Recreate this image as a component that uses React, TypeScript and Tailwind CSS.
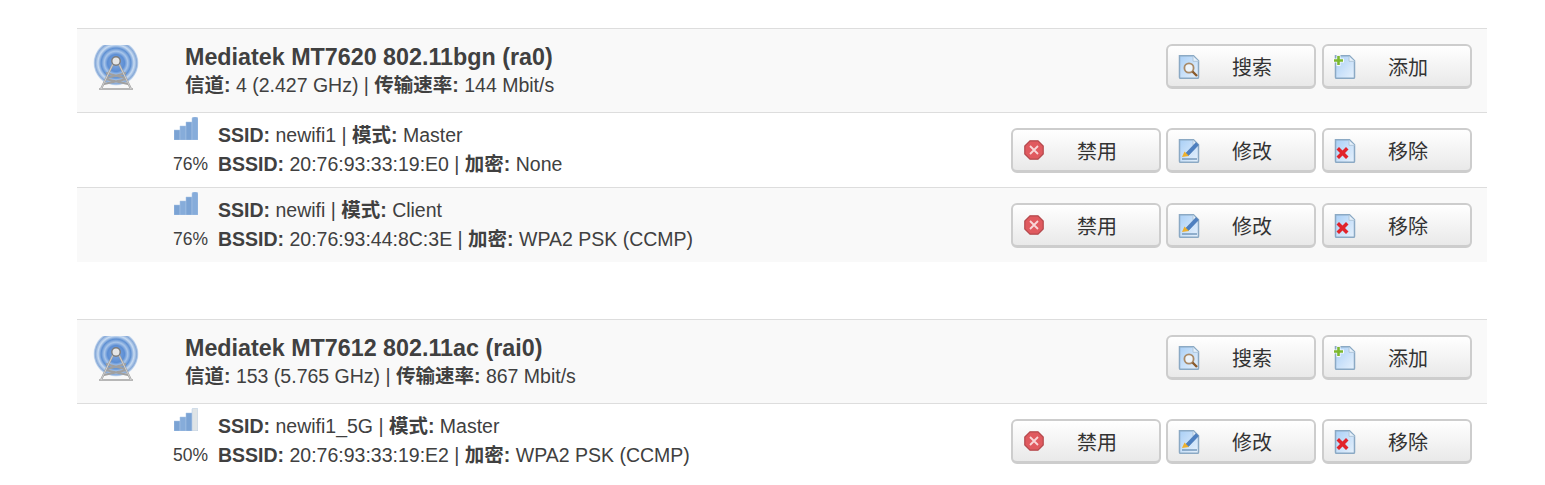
const FONT = "font-['Liberation_Sans','Noto_Sans_CJK_SC',sans-serif]";

function PageIcon({ children }: { children?: React.ReactNode }) {
  return (
    <svg width="24" height="24" viewBox="0 0 24 24" className="mt-[2px] shrink-0">
      <defs>
        <linearGradient id="pageFill" x1="0" y1="0" x2="1" y2="1">
          <stop offset="0" stopColor="#a9cff6" />
          <stop offset="0.6" stopColor="#cfe4fa" />
          <stop offset="1" stopColor="#e6f1fc" />
        </linearGradient>
      </defs>
      <path d="M2.500 .8h14l5 5v16.500q0 1-1 1h-17q-1 0-1-1z" fill="url(#pageFill)" stroke="#8ba9c4" strokeWidth="1.500" />
      <path d="M16 1.300v5h5.500" fill="#e6f0fa" stroke="#b0c6da" strokeWidth="1" />
      {children}
    </svg>
  );
}

function SearchIcon() {
  return (
    <PageIcon>
      <circle cx="12" cy="13" r="4.600" fill="#eef5fc" stroke="#a98a68" strokeWidth="1.800" />
      <path d="M15.500 16.500l4.500 4.500" stroke="#8a5a2c" strokeWidth="2.400" />
    </PageIcon>
  );
}

function AddIcon() {
  return (
    <PageIcon>
      <path d="M3.500 0h4v3.500H11v4H7.500V11h-4V7.500H0v-4h3.500z" fill="#fff" opacity="0.85" />
      <path d="M4.200 1h2.600v3.200H10v2.600H6.800V10H4.200V6.800H1V4.200h3.200z" fill="#7cb82f" />
    </PageIcon>
  );
}

function RemoveIcon() {
  return (
    <PageIcon>
      <path d="M3.500 10.500l2.500-2.500 3.500 3.500 3.500-3.500 2.500 2.500-3.500 3.500 3.500 3.500-2.500 2.500-3.500-3.500-3.500 3.500-2.500-2.500 3.500-3.500z" fill="#e1232b" />
    </PageIcon>
  );
}

function EditIcon() {
  return (
    <PageIcon>
      <path d="M8.500 14.500l10.500-11 2.500 2.500-10.500 11z" fill="#4d7fc0" stroke="#3a6aa6" strokeWidth="0.500" />
      <path d="M5 18l2.500-5.500 4.500 4.500z" fill="#eeb02c" />
      <path d="M5 20h15" stroke="#6f94b8" strokeWidth="1.400" />
    </PageIcon>
  );
}

function StopIcon() {
  return (
    <svg width="20" height="20" viewBox="0 0 20 20" className="shrink-0">
      <path d="M6 .8h8L19.200 6v8L14 19.200H6L.8 14V6z" fill="#e05a5f" stroke="#b4484c" strokeWidth="1.200" />
      <path d="M6 6l8 8M14 6l-8 8" stroke="#f8d7d8" strokeWidth="1.800" />
    </svg>
  );
}

function TowerIcon() {
  return (
    <svg width="46" height="46" viewBox="0 0 46 46">
      <defs>
        <radialGradient id="waves">
          <stop offset="0" stopColor="#86abe0" />
          <stop offset="0.38" stopColor="#5c8ed4" />
          <stop offset="0.52" stopColor="#a9c6ea" />
          <stop offset="0.66" stopColor="#5f90d2" />
          <stop offset="0.8" stopColor="#c9dcf2" />
          <stop offset="0.92" stopColor="#86a9d8" />
          <stop offset="1" stopColor="#d8e5f4" />
        </radialGradient>
      </defs>
      <circle cx="23" cy="18" r="22.500" fill="url(#waves)" />
      <path d="M20 19L8 44M26 19l12 25M6 44h34M14 33l19-5M32 33l-19-5M11 39l23-5M35 39l-23-5" stroke="#a0a0a0" strokeWidth="2" fill="none" />
      <path d="M20 19L8 44M26 19l12 25M6 44h34" stroke="#e2e2e2" strokeWidth="0.700" fill="none" />
      <circle cx="23" cy="16" r="4.200" fill="#e6e6e6" stroke="#7c7c7c" strokeWidth="1.400" />
    </svg>
  );
}

function SignalIcon({ level }: { level: number }) {
  const bars = [
    'M0 13h6v10H0z',
    'M6 9h6v14H6z',
    'M12 5h6v18h-6z',
    'M18 1.500q0-1.500 2-1.500h2q2 0 2 1.500V23h-6z',
  ];
  return (
    <svg width="24" height="23" viewBox="0 0 24 23">
      {bars.map((d, i) => (
        <path key={d} d={d} fill={i >= level ? '#dfe4e6' : i % 2 ? '#86acda' : '#7ba3d4'} stroke="#a9c5e6" strokeWidth="0.500" />
      ))}
    </svg>
  );
}

function Btn({ icon, label, className = '' }: { icon: React.ReactNode; label: string; className?: string }) {
  return (
    <button className={`flex h-[45px] w-[150px] items-center rounded-[6px] border-2 border-b-[3px] border-[#cdcdcd] bg-gradient-to-b from-white to-[#e9e9e9] pl-[9px] text-[20px] text-[#333] ${className}`}>
      <span className="flex w-[24px] justify-center">{icon}</span>
      <span className="flex-1 pr-[11px] pt-[4px] text-center">{label}</span>
    </button>
  );
}

function NetRow({ ssid, mode, bssid, enc, pct, level, alt }: { ssid: string; mode: string; bssid: string; enc: string; pct: string; level: number; alt?: boolean }) {
  return (
    <div className={`flex h-[75px] items-center border-t border-[#ddd] ${alt ? 'bg-[#f9f9f9]' : 'bg-white'}`}>
      <div className="flex w-[141px] flex-col items-end pb-[10px] pr-[10px]">
        <div className="mr-[10px] h-[23px]"><SignalIcon level={level} /></div>
        <span className="mt-[14px] text-[17.5px] leading-[20px]">{pct}</span>
      </div>
      <div className="flex-1 text-[19.5px] leading-[29px]">
        <div><b>SSID:</b> {ssid} | <b>模式:</b> {mode}</div>
        <div><b>BSSID:</b> {bssid} | <b>加密:</b> {enc}</div>
      </div>
      <div className="flex gap-[6px] pr-[15px]">
        <Btn icon={<StopIcon />} label="禁用" className="-mr-px" />
        <Btn icon={<EditIcon />} label="修改" />
        <Btn icon={<RemoveIcon />} label="移除" />
      </div>
    </div>
  );
}

function Radio({ title, channel, rate, children }: { title: string; channel: string; rate: string; children: React.ReactNode }) {
  return (
    <section className="border-t border-[#ddd]">
      <div className="flex h-[83px] items-center bg-[#f9f9f9]">
        <div className="flex w-[108px] pb-[6px] pl-[16px]"><TowerIcon /></div>
        <div className="flex-1">
          <div className="text-[23.3px] font-bold leading-[28px]">{title}</div>
          <div className="text-[19.5px] leading-[28px]"><b>信道:</b> {channel} | <b>传输速率:</b> {rate}</div>
        </div>
        <div className="flex gap-[6px] pb-[8px] pr-[15px]">
          <Btn icon={<SearchIcon />} label="搜索" />
          <Btn icon={<AddIcon />} label="添加" />
        </div>
      </div>
      {children}
    </section>
  );
}

export default function App() {
  return (
    <div className={`${FONT} flex h-[485px] flex-col gap-[57px] overflow-hidden bg-white pl-[77px] pr-[58px] pt-[28px] text-[#404040]`}>
      <Radio title="Mediatek MT7620 802.11bgn (ra0)" channel="4 (2.427 GHz)" rate="144 Mbit/s">
        <NetRow ssid="newifi1" mode="Master" bssid="20:76:93:33:19:E0" enc="None" pct="76%" level={4} />
        <NetRow ssid="newifi" mode="Client" bssid="20:76:93:44:8C:3E" enc="WPA2 PSK (CCMP)" pct="76%" level={4} alt />
      </Radio>
      <Radio title="Mediatek MT7612 802.11ac (rai0)" channel="153 (5.765 GHz)" rate="867 Mbit/s">
        <NetRow ssid="newifi1_5G" mode="Master" bssid="20:76:93:33:19:E2" enc="WPA2 PSK (CCMP)" pct="50%" level={3} />
      </Radio>
    </div>
  );
}
